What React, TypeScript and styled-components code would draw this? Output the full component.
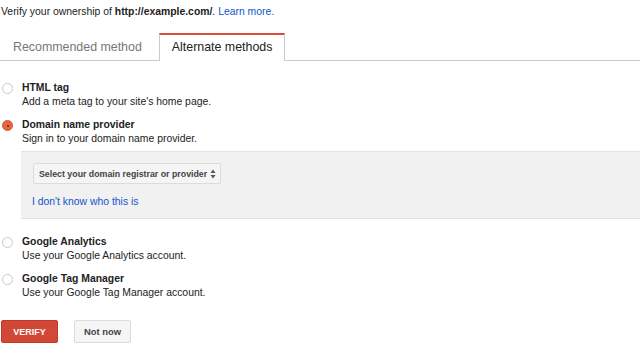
import styled, { createGlobalStyle } from 'styled-components';

const GlobalStyle = createGlobalStyle`
  body {
    margin: 0;
    background: #fff;
    font-family: Arial, "Liberation Sans", sans-serif;
    font-size: 10.4px;
    color: #222;
  }
`;

interface Method {
  title: string;
  description: string;
  selected?: boolean;
}

const methods: Method[] = [
  { title: 'HTML tag', description: "Add a meta tag to your site's home page." },
  {
    title: 'Domain name provider',
    description: 'Sign in to your domain name provider.',
    selected: true,
  },
  { title: 'Google Analytics', description: 'Use your Google Analytics account.' },
  { title: 'Google Tag Manager', description: 'Use your Google Tag Manager account.' },
];

export default function App() {
  return (
    <Page>
      <GlobalStyle />
      <Intro>
        Verify your ownership of <strong>http://example.com/</strong>.{' '}
        <Link href="#">Learn more.</Link>
      </Intro>
      <Tabs>
        <Tab>Recommended method</Tab>
        <Tab $active>Alternate methods</Tab>
      </Tabs>
      <Options>
        {methods.map(m => (
          <Option key={m.title} $selected={m.selected}>
            <OptionRow>
              <Radio $checked={m.selected} />
              <OptionText>
                <OptionTitle>{m.title}</OptionTitle>
                <OptionDesc>{m.description}</OptionDesc>
              </OptionText>
            </OptionRow>
            {m.selected ? (
              <Panel>
                <Select>
                  Select your domain registrar or provider
                  <svg width="6" height="10" viewBox="0 0 6 10">
                    <path d="M3 0.5 L5.5 4 H0.5 Z M0.5 6 H5.5 L3 9.5 Z" fill="#555" />
                  </svg>
                </Select>
                <PanelLink href="#">I don't know who this is</PanelLink>
              </Panel>
            ) : undefined}
          </Option>
        ))}
      </Options>
      <Actions>
        <PrimaryButton>VERIFY</PrimaryButton>
        <SecondaryButton>Not now</SecondaryButton>
      </Actions>
    </Page>
  );
}

const Page = styled.div`
  width: 640px;
  height: 360px;
  overflow: hidden;
  padding-top: 5px;
  box-sizing: border-box;
`;

const Intro = styled.p`
  margin: 0 0 0 1px;
  line-height: 14px;
  color: #222;
`;

const Link = styled.a`
  color: #15c;
  text-decoration: none;
`;

const Tabs = styled.div`
  display: flex;
  margin-top: 14px;
  border-bottom: 1px solid #ccc;
  height: 27px;
`;

const Tab = styled.div<{ $active?: boolean }>`
  padding: 0 12px;
  box-sizing: border-box;
  font-size: 12.4px;
  white-space: nowrap;
  background: #fff;
  color: ${({ $active }) => ($active ? '#222' : '#777')};
  height: ${({ $active }) => ($active ? '28px' : '27px')};
  line-height: ${({ $active }) => ($active ? '25px' : '28px')};
  margin-bottom: ${({ $active }) => ($active ? '-1px' : '0')};
  border: 1px solid ${({ $active }) => ($active ? '#ccc' : 'transparent')};
  border-top: ${({ $active }) => ($active ? '2px solid #dd4b39' : 'none')};
  border-bottom: none;

  &:first-child {
    padding-right: 16px;
  }
`;

const Options = styled.div`
  display: flex;
  flex-direction: column;
  gap: 9px;
  margin-top: 20px;
`;

const Option = styled.div<{ $selected?: boolean }>`
  margin-bottom: ${({ $selected }) => ($selected ? '7px' : '0')};
`;

const OptionRow = styled.div`
  display: flex;
  align-items: flex-start;
`;

const Radio = styled.span<{ $checked?: boolean }>`
  position: relative;
  flex: none;
  width: 11px;
  height: 11px;
  margin: 2px 9px 0 2px;
  border-radius: 50%;
  box-sizing: border-box;
  border: 1px solid ${({ $checked }) => ($checked ? '#d8542f' : '#c8c8c8')};
  background: ${({ $checked }) => ($checked ? '#e8663f' : '#fff')};

  &::after {
    content: '';
    display: ${({ $checked }) => ($checked ? 'block' : 'none')};
    position: absolute;
    left: 3.5px;
    top: 3.5px;
    width: 2px;
    height: 2px;
    border-radius: 50%;
    background: #5a2a1a;
  }
`;

const OptionText = styled.div`
  display: flex;
  flex-direction: column;
`;

const OptionTitle = styled.span`
  font-weight: bold;
  line-height: 14px;
  color: #222;
`;

const OptionDesc = styled.span`
  line-height: 14px;
  color: #222;
`;

const Panel = styled.div`
  margin: 5px 0 0 21px;
  background: #f1f1f1;
  border-top: 1px solid #e2e2e2;
  border-bottom: 1px solid #e2e2e2;
  padding: 11px 12px 9px;
  display: flex;
  flex-direction: column;
  align-items: flex-start;
  gap: 11px;
`;

const Select = styled.div`
  display: flex;
  align-items: center;
  gap: 3px;
  height: 21px;
  box-sizing: border-box;
  padding: 0 4px 0 5px;
  border: 1px solid #dcdcdc;
  background: #f5f5f5;
  font-size: 8.8px;
  font-weight: bold;
  white-space: nowrap;
  color: #444;
  border-radius: 2px;
`;

const PanelLink = styled.a`
  color: #15c;
  text-decoration: none;
  line-height: 14px;
  margin-left: -1px;
`;

const Actions = styled.div`
  display: flex;
  gap: 16px;
  margin: 20px 0 0 1px;
`;

const ButtonBase = styled.button`
  width: 57px;
  height: 23px;
  box-sizing: border-box;
  border-radius: 2px;
  font-family: Arial, "Liberation Sans", sans-serif;
  font-size: 9px;
  font-weight: bold;
  padding: 0;
  cursor: pointer;
`;

const PrimaryButton = styled(ButtonBase)`
  background: #d14836;
  border: 1px solid #c53727;
  color: #fff;
`;

const SecondaryButton = styled(ButtonBase)`
  background: #f5f5f5;
  border: 1px solid #dcdcdc;
  color: #444;
  font-size: 9.4px;
`;
